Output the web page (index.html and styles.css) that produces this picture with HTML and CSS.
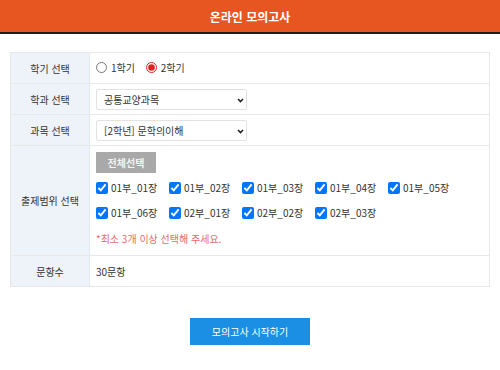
FILE: index.html
```html
<!DOCTYPE html>
<html lang="ko">
<head>
  <meta charset="UTF-8">
  <meta name="viewport" content="width=device-width, initial-scale=1.0">
  <title>온라인 모의고사</title>
  <link rel="stylesheet" href="styles.css">
</head>
<body>

  <header class="top-bar">
    <h1>온라인 모의고사</h1>
  </header>

  <div class="wrap">
    <table class="exam-table">
      <tr class="row-short">
        <th>학기 선택</th>
        <td>
          <label class="radio"><input type="radio" name="term" value="1"> 1학기</label>
          <label class="radio"><input type="radio" name="term" value="2" checked> 2학기</label>
        </td>
      </tr>
      <tr class="row-short">
        <th>학과 선택</th>
        <td>
          <span class="pick-wrap">
            <select class="pick">
              <option>공통교양과목</option>
            </select>
            <svg class="pick-arrow" width="7" height="5" viewBox="0 0 7 5"><path d="M1 1 L3.5 3.5 L6 1" fill="none" stroke="#222" stroke-width="1.6"/></svg>
          </span>
        </td>
      </tr>
      <tr class="row-short">
        <th>과목 선택</th>
        <td>
          <span class="pick-wrap">
            <select class="pick">
              <option>[2학년] 문학의이해</option>
            </select>
            <svg class="pick-arrow" width="7" height="5" viewBox="0 0 7 5"><path d="M1 1 L3.5 3.5 L6 1" fill="none" stroke="#222" stroke-width="1.6"/></svg>
          </span>
        </td>
      </tr>
      <tr>
        <th>출제범위 선택</th>
        <td class="range-cell">
          <button type="button" class="btn-all">전체선택</button>
          <div class="chapters" id="chapters">
            <!-- chapters are filled in by the script -->
          </div>
          <p class="notice">*최소 3개 이상 선택해 주세요.</p>
        </td>
      </tr>
      <tr class="row-short">
        <th>문항수</th>
        <td>30문항</td>
      </tr>
    </table>

    <div class="actions">
      <button type="button" class="btn-start">모의고사 시작하기</button>
    </div>
  </div>

  <script>
    // chapter list for the selected subject
    const chapters = ['01부_01장', '01부_02장', '01부_03장', '01부_04장', '01부_05장',
                      '01부_06장', '02부_01장', '02부_02장', '02부_03장'];

    const box = document.getElementById('chapters');
    chapters.forEach(name => {
      const item = document.createElement('label');
      item.className = 'chapter';
      item.innerHTML = `<input type="checkbox" checked> ${name}`;
      box.appendChild(item);
    });

    document.querySelector('.btn-all').onclick = function() {
      box.querySelectorAll('input').forEach(cb => cb.checked = true);
    }
  </script>

</body>
</html>
```

FILE: styles.css
```css
body {
  font-family: "Noto Sans CJK KR", "Liberation Sans", sans-serif;
  font-size: 10px;
  color: #333;
  background-color: #fff;
  margin: 0;
}
.top-bar {
  background-color: #e75621;
  border-bottom: 2px solid #1d1d1d;
  height: 32px;
  display: flex;
  align-items: center;
  justify-content: center;
}
.top-bar h1 {
  margin: 0;
  color: #fff;
  font-size: 12px;
  font-weight: bold;
}
.wrap {
  padding: 18px 10px 0;
}
.exam-table {
  width: 100%;
  border-collapse: collapse;
  border: 1px solid #e8e8e8;
}
.exam-table th, .exam-table td {
  border-top: 1px solid #e8e8e8;
  border-bottom: 1px solid #e8e8e8;
  padding: 0 6px;
  text-align: left;
  font-weight: normal;
}
.exam-table th {
  width: 66px;
  text-align: center;
  background-color: #eef2f9;
  border-right: 1px solid #e4e8ef;
}
.row-short th, .row-short td {
  height: 30px;
}
.radio {
  display: inline-flex;
  align-items: center;
  margin-right: 8px;
}
.radio input {
  margin: 0 4px 0 0;
  width: 11px;
  height: 11px;
  accent-color: #e02020;
}
.pick-wrap {
  position: relative;
  display: inline-block;
  vertical-align: middle;
}
.pick {
  display: block;
  -webkit-appearance: none;
  appearance: none;
  width: 151px;
  height: 21px;
  font-family: inherit;
  font-size: 10px;
  color: #333;
  border: 1px solid #e2e2e2;
  border-radius: 2px;
  background-color: #fff;
  padding: 0 7px;
}
.pick-arrow {
  position: absolute;
  right: 3px;
  top: 9px;
}
.range-cell {
  padding-top: 6px !important;
  padding-bottom: 9px !important;
}
.btn-all {
  display: block;
  width: 60px;
  height: 21px;
  background-color: #a9a9a9;
  color: #f4f4f4;
  border: none;
  font-family: inherit;
  font-size: 10px;
  font-weight: bold;
  padding: 0;
}
.chapters {
  display: flex;
  flex-wrap: wrap;
  margin-top: 2px;
}
.chapter {
  width: 73px;
  height: 25px;
  display: flex;
  align-items: center;
}
.chapter input {
  margin: 0 3px 0 0;
  width: 12px;
  height: 12px;
}
.notice {
  margin: 6px 0 0;
  color: #e86a6a;
}
.actions {
  display: flex;
  justify-content: center;
  margin-top: 31px;
}
.btn-start {
  width: 120px;
  height: 27px;
  background-color: #1a8fe3;
  color: #fff;
  border: none;
  font-family: inherit;
  font-size: 10px;
}
```
